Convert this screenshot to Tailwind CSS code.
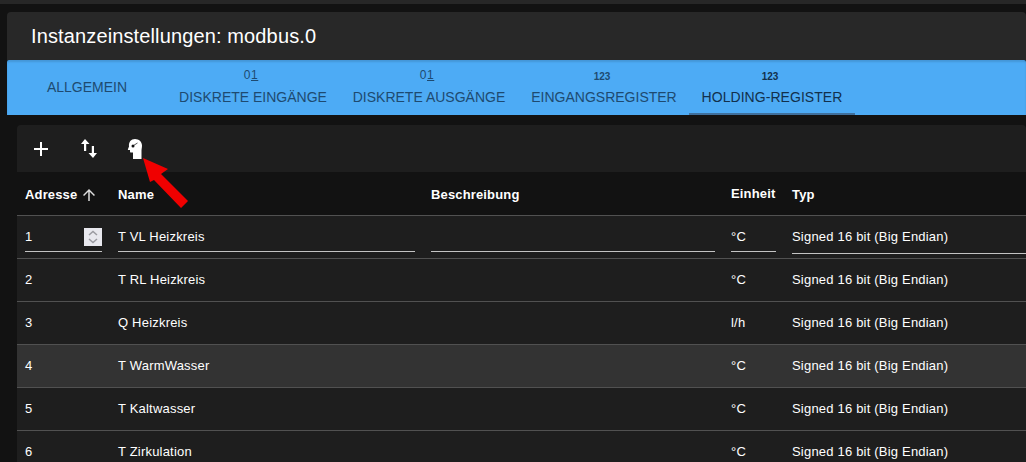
<!DOCTYPE html>
<html><head><meta charset="utf-8"><script src="https://cdn.jsdelivr.net/npm/@tailwindcss/browser@4"></script></head>
<body class="relative m-0 w-[1026px] h-[462px] overflow-hidden bg-[#121212] font-['Liberation_Sans',Arial,sans-serif] text-white">
<div class="h-[4px] bg-[#272727]"></div>
<div class="pl-[7px] pt-[8px]">
  <div class="h-[48px] rounded-t-[4px] bg-[#282828] flex items-center pl-[24px] text-[20px] tracking-[0.13px] leading-[48px]">Instanzeinstellungen: modbus.0</div>
  <div class="h-[55px] bg-[#4dabf5] flex shadow-[inset_0_2px_2px_rgba(0,0,0,0.12)] rounded-t-[2px] text-[14px] text-[#1e4a70]">
    <div class="w-[160px] flex items-center justify-center"><span class="mb-[1px]">ALLGEMEIN</span></div>
    <div class="w-[172px] flex flex-col items-center pt-[9px]"><span class="text-[12px] leading-[13px] tracking-[0.6px] mr-[4px]">0<span class="underline">1</span></span><span class="leading-[16px] mt-[7px]">DISKRETE EINGÄNGE</span></div>
    <div class="w-[180px] flex flex-col items-center pt-[9px]"><span class="text-[12px] leading-[13px] tracking-[0.6px] mr-[4px]">0<span class="underline">1</span></span><span class="leading-[16px] mt-[7px]">DISKRETE AUSGÄNGE</span></div>
    <div class="w-[170px] flex flex-col items-center pt-[10px]"><span class="text-[10px] font-bold leading-[13px] mr-[4px]">123</span><span class="leading-[16px] mt-[6px]">EINGANGSREGISTER</span></div>
    <div class="w-[166px] flex flex-col items-center pt-[10px] border-b-[2px] border-[#3f6f9c] text-[#12304c]"><span class="text-[10px] font-bold leading-[13px] mr-[4px]">123</span><span class="leading-[16px] mt-[6px] tracking-[0.05px]">HOLDING-REGISTER</span></div>
  </div>
</div>
<div class="ml-[17px] mt-[10px] rounded-t-[4px] bg-[#1e1e1e] text-[13px] tracking-[0.2px]">
  <div class="h-[47px] flex items-center">
    <svg class="ml-[17px]" width="14" height="14" viewBox="0 0 14 14" fill="#fff"><rect x="0" y="6" width="14" height="2"/><rect x="6" y="0" width="2" height="14"/></svg>
    <svg class="ml-[33px]" width="16" height="20" viewBox="0 0 16 20" fill="#fff"><path d="M4 0l4.500 5H5.200v7H3V5H0zM12 19l-4.500-5h3.300V7h2.200v7H16z"/></svg>
    <svg class="ml-[30px] mt-[1px]" width="16" height="22" viewBox="0 0 16 22"><path fill="#fff" d="M8 1c3.800 0 7 2.800 7 6.500 0 2.200-.5 3.500-.5 5V21H6v-6.500H4c-.8 0-1-.5-1-1.500V12H1.500c-.6 0-.8-.4-.5-1L2 8.500C1.500 4 4 1 8 1z"/><circle cx="6" cy="8" r="1.500" fill="#111"/><path d="M6.500 7.500l4-2.500" stroke="#111" stroke-width=".7"/></svg>
  </div>
  <div class="h-[44px] bg-[#121212] border-b border-[#515151] grid grid-cols-[77px_297px_284px_45px_1fr] gap-x-[16px] pl-[8px] pt-[3px] items-center font-bold tracking-[0.15px]">
    <div class="flex items-center gap-[3px]">Adresse <svg width="18" height="18" viewBox="0 0 24 24" fill="#ddd"><path d="M4 12l1.410 1.410L11 7.830V20h2V7.830l5.580 5.590L20 12l-8-8z"/></svg></div>
    <div>Name</div><div>Beschreibung</div><div class="-mt-[2px]">Einheit</div><div>Typ</div>
  </div>
  <div class="h-[43px] border-b border-[#515151] grid grid-cols-[77px_297px_284px_45px_1fr] gap-x-[16px] pl-[8px] items-start">
    <div class="relative mt-[11px] h-[25px] pt-[2px] border-b border-[#c4c4c4] leading-[15px]">1
      <div class="absolute right-0 top-[1px] w-[18px] h-[18px] bg-[#e8e8ee] flex items-center justify-center"><svg width="12" height="16" viewBox="0 0 12 16" fill="none" stroke="#9a9aa0" stroke-width="1.500"><path d="M2 6l4-3.500L10 6M2 10l4 3.500L10 10"/></svg></div></div>
    <div class="mt-[11px] h-[25px] pt-[2px] border-b border-[#c4c4c4] leading-[15px]">T VL Heizkreis</div>
    <div class="mt-[11px] h-[25px] border-b border-[#c4c4c4]"></div>
    <div class="mt-[11px] h-[25px] pt-[2px] border-b border-[#c4c4c4] leading-[15px]">°C</div>
    <div class="mt-[11px] h-[27px] pt-[2px] border-b border-[#c4c4c4] leading-[15px]">Signed 16 bit (Big Endian)</div>
  </div>
  <div class="h-[43px] border-b border-[#515151] grid grid-cols-[77px_297px_284px_45px_1fr] gap-x-[16px] pl-[8px] items-center"><div>2</div><div>T RL Heizkreis</div><div></div><div>°C</div><div>Signed 16 bit (Big Endian)</div></div>
  <div class="h-[43px] border-b border-[#515151] grid grid-cols-[77px_297px_284px_45px_1fr] gap-x-[16px] pl-[8px] items-center"><div>3</div><div>Q Heizkreis</div><div></div><div>l/h</div><div>Signed 16 bit (Big Endian)</div></div>
  <div class="h-[43px] border-b border-[#515151] bg-[#333333] grid grid-cols-[77px_297px_284px_45px_1fr] gap-x-[16px] pl-[8px] items-center"><div>4</div><div>T WarmWasser</div><div></div><div>°C</div><div>Signed 16 bit (Big Endian)</div></div>
  <div class="h-[43px] border-b border-[#515151] grid grid-cols-[77px_297px_284px_45px_1fr] gap-x-[16px] pl-[8px] items-center"><div>5</div><div>T Kaltwasser</div><div></div><div>°C</div><div>Signed 16 bit (Big Endian)</div></div>
  <div class="h-[43px] border-b border-[#515151] grid grid-cols-[77px_297px_284px_45px_1fr] gap-x-[16px] pl-[8px] items-center"><div>6</div><div>T Zirkulation</div><div></div><div>°C</div><div>Signed 16 bit (Big Endian)</div></div>
</div>
<svg class="absolute left-0 top-0" width="1026" height="462" fill="#f00000"><polygon points="143,158 168,169 161,174 188,201 181,208 154,180 150,182"/></svg>
</body></html>
